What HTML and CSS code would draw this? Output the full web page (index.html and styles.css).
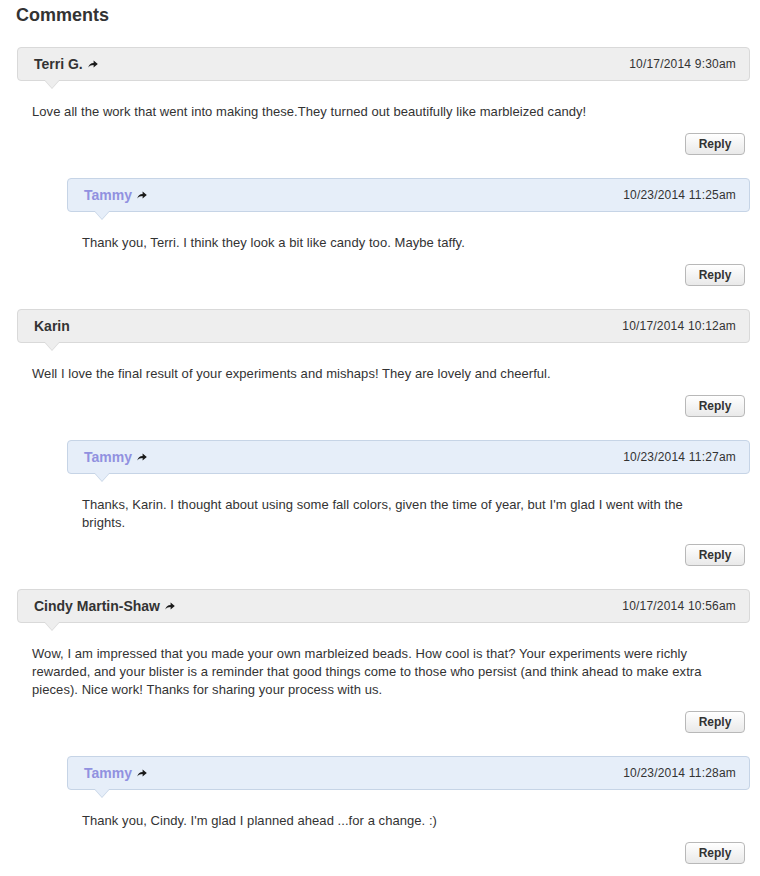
FILE: index.html
```html
<!DOCTYPE html>
<html lang="en">
    <head>
        <meta charset="utf-8" />
        <title>Comments</title>
        <link rel="stylesheet" href="styles.css">
    </head>
    <body>
        <div class="comments">
            <h2 class="comments_title">Comments</h2>

            <!-- comment 1 -->
            <div class="comment">
                <div class="comment_head">
                    <span class="author">Terri G. <svg class="go" viewBox="0 0 10 8" width="10" height="8"><path d="M0.3 7.6 C0.8 4.6 2.8 2.9 5.6 2.9 L5.6 0.4 L9.8 4 L5.6 7.6 L5.6 5.1 C3.4 5.1 1.7 5.8 0.3 7.6 Z" fill="#1a1a1a"/></svg></span>
                    <span class="date">10/17/2014 9:30am</span>
                </div>
                <div class="comment_body">
                    <p>Love all the work that went into making these.They turned out beautifully like marbleized candy!</p>
                    <div class="actions"><button class="reply">Reply</button></div>
                </div>
            </div>
            <div class="comment reply_to">
                <div class="comment_head">
                    <span class="author owner">Tammy <svg class="go" viewBox="0 0 10 8" width="10" height="8"><path d="M0.3 7.6 C0.8 4.6 2.8 2.9 5.6 2.9 L5.6 0.4 L9.8 4 L5.6 7.6 L5.6 5.1 C3.4 5.1 1.7 5.8 0.3 7.6 Z" fill="#1a1a1a"/></svg></span>
                    <span class="date">10/23/2014 11:25am</span>
                </div>
                <div class="comment_body">
                    <p>Thank you, Terri. I think they look a bit like candy too. Maybe taffy.</p>
                    <div class="actions"><button class="reply">Reply</button></div>
                </div>
            </div>

            <!-- comment 2 -->
            <div class="comment">
                <div class="comment_head">
                    <span class="author">Karin</span>
                    <span class="date">10/17/2014 10:12am</span>
                </div>
                <div class="comment_body">
                    <p>Well I love the final result of your experiments and mishaps! They are lovely and cheerful.</p>
                    <div class="actions"><button class="reply">Reply</button></div>
                </div>
            </div>
            <div class="comment reply_to">
                <div class="comment_head">
                    <span class="author owner">Tammy <svg class="go" viewBox="0 0 10 8" width="10" height="8"><path d="M0.3 7.6 C0.8 4.6 2.8 2.9 5.6 2.9 L5.6 0.4 L9.8 4 L5.6 7.6 L5.6 5.1 C3.4 5.1 1.7 5.8 0.3 7.6 Z" fill="#1a1a1a"/></svg></span>
                    <span class="date">10/23/2014 11:27am</span>
                </div>
                <div class="comment_body">
                    <p>Thanks, Karin. I thought about using some fall colors, given the time of year, but I'm glad I went with the brights.</p>
                    <div class="actions"><button class="reply">Reply</button></div>
                </div>
            </div>

            <!-- comment 3 -->
            <div class="comment">
                <div class="comment_head">
                    <span class="author">Cindy Martin-Shaw <svg class="go" viewBox="0 0 10 8" width="10" height="8"><path d="M0.3 7.6 C0.8 4.6 2.8 2.9 5.6 2.9 L5.6 0.4 L9.8 4 L5.6 7.6 L5.6 5.1 C3.4 5.1 1.7 5.8 0.3 7.6 Z" fill="#1a1a1a"/></svg></span>
                    <span class="date">10/17/2014 10:56am</span>
                </div>
                <div class="comment_body">
                    <p>Wow, I am impressed that you made your own marbleized beads. How cool is that? Your experiments were richly rewarded, and your blister is a reminder that good things come to those who persist (and think ahead to make extra pieces). Nice work! Thanks for sharing your process with us.</p>
                    <div class="actions"><button class="reply">Reply</button></div>
                </div>
            </div>
            <div class="comment reply_to">
                <div class="comment_head">
                    <span class="author owner">Tammy <svg class="go" viewBox="0 0 10 8" width="10" height="8"><path d="M0.3 7.6 C0.8 4.6 2.8 2.9 5.6 2.9 L5.6 0.4 L9.8 4 L5.6 7.6 L5.6 5.1 C3.4 5.1 1.7 5.8 0.3 7.6 Z" fill="#1a1a1a"/></svg></span>
                    <span class="date">10/23/2014 11:28am</span>
                </div>
                <div class="comment_body">
                    <p>Thank you, Cindy. I'm glad I planned ahead ...for a change. :)</p>
                    <div class="actions"><button class="reply">Reply</button></div>
                </div>
            </div>
        </div>
    </body>
</html>
```

FILE: styles.css
```css
body {
    font-family: "Liberation Sans", Arial, sans-serif;
    color: #333;
    background-color: #fff;
    margin: 0;
}

/* wrapper for the whole comment list */
.comments {
    width: 733px;
    margin-left: 17px;
}

.comments_title {
    font-size: 18px;
    line-height: 22px;
    font-weight: bold;
    margin: 0 0 21px -1px;
    padding-top: 4px;
    color: #333;
}

.comment {
    margin-bottom: 23px;
}

.reply_to {
    margin-left: 50px;
}

/* grey bar with the name and the date */
.comment_head {
    position: relative;
    display: flex;
    justify-content: space-between;
    align-items: center;
    height: 32px;
    padding: 0 13px 0 16px;
    background-color: #eee;
    border: 1px solid #d9d9d9;
    border-radius: 4px;
}

/* little pointer under the bar */
.comment_head:before,
.comment_head:after {
    content: "";
    position: absolute;
    left: 26px;
    width: 0;
    height: 0;
    border-left: 8px solid transparent;
    border-right: 8px solid transparent;
}

.comment_head:before {
    top: 32px;
    border-top: 9px solid #d9d9d9;
}

.comment_head:after {
    top: 31px;
    border-top: 9px solid #eee;
}

.reply_to .comment_head {
    background-color: #e6eef9;
    border-color: #c6d4e6;
}

.reply_to .comment_head:before {
    border-top-color: #c6d4e6;
}

.reply_to .comment_head:after {
    border-top-color: #e6eef9;
}

.author {
    display: flex;
    align-items: center;
    font-size: 14px;
    font-weight: bold;
    color: #333;
}

.author.owner {
    color: #9191e0;
}

.go {
    margin-left: 5px;
}

.date {
    font-size: 12px;
    letter-spacing: 0.2px;
    color: #333;
}

.comment_body {
    padding: 22px 30px 0 15px;
}

.comment_body p {
    margin: 0;
    font-size: 13px;
    line-height: 18px;
    letter-spacing: 0.06px;
    color: #333;
}

.actions {
    text-align: right;
    margin-top: 12px;
    margin-right: -25px;
}

.reply {
    font-family: "Liberation Sans", Arial, sans-serif;
    font-size: 12px;
    font-weight: bold;
    color: #333;
    width: 60px;
    height: 22px;
    padding: 0;
    background: linear-gradient(#fff, #e9e9e9);
    border: 1px solid #b8b8b8;
    border-radius: 4px;
    cursor: pointer;
}
```
